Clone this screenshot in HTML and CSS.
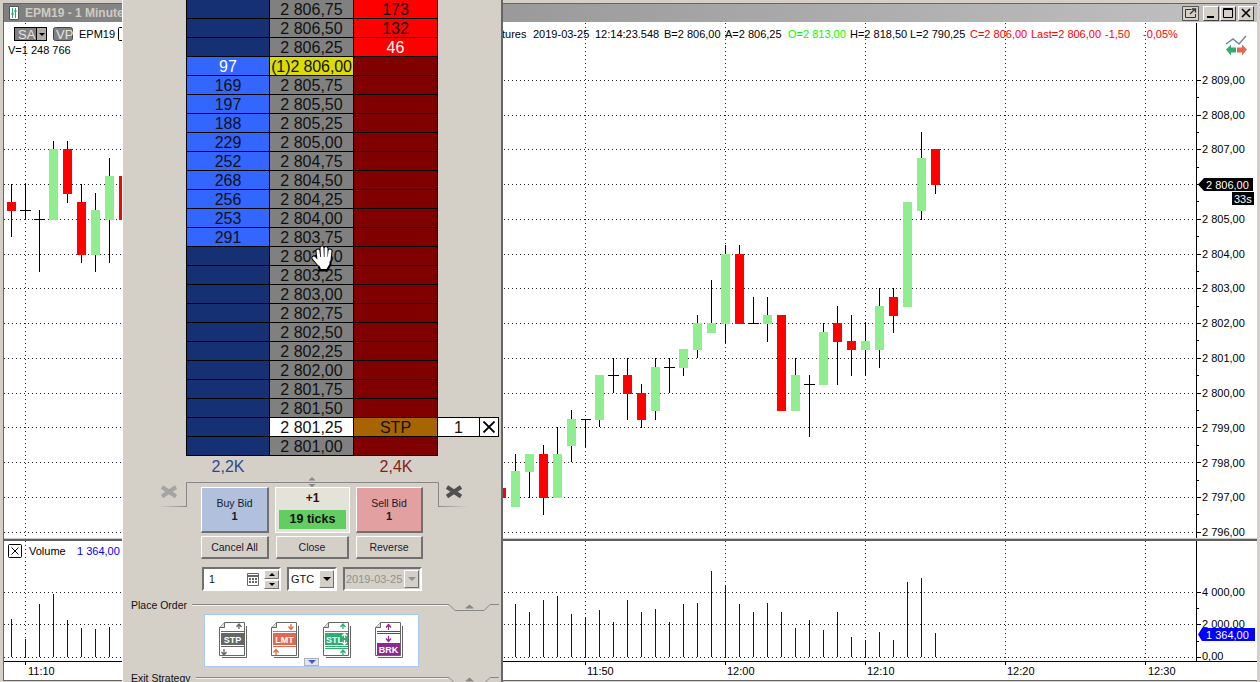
FILE: index.html
```html
<!DOCTYPE html>
<html lang="en">
<head>
<meta charset="utf-8">
<title>EPM19 - 1 Minute</title>
<link rel="stylesheet" href="styles.css">
</head>
<body>
<div class="desktop">
  <section class="window">
    <header class="titlebar">
      <svg class="doc-icon" width="10" height="14" viewBox="0 0 10 14"><path d="M.5.5h9v13h-9z" fill="#fff" stroke="#555"/><path d="M3.5 2v10M6.5 2v10M2 8h3M5 5h3" stroke="#1fa878" fill="none"/></svg>
      <span class="title">EPM19 - 1 Minute</span>
      <svg class="popout" width="17" height="15" viewBox="0 0 17 15"><path d="M.5.5h16v14H.5z" fill="#d4d0c8" stroke="#555"/><path d="M3.5 3.5h6M3.5 3.5v8h10V8" fill="none" stroke="#333"/><path d="M8 8l5-5M10 3h3.500v3.500" fill="none" stroke="#333" stroke-width="1.300"/></svg>
      <div class="winbtns">
        <button class="winbtn"><svg width="14" height="12" viewBox="0 0 14 12"><path d="M3 9h7v2H3z" fill="#000"/></svg></button>
        <button class="winbtn"><svg width="14" height="12" viewBox="0 0 14 12"><path d="M2.500 1.500h9v9h-9z M2.500 2.500h9" fill="none" stroke="#000"/></svg></button>
        <button class="winbtn winbtn-close"><svg width="14" height="12" viewBox="0 0 14 12"><path d="M3 2l8 8M11 2l-8 8" fill="none" stroke="#000" stroke-width="1.600"/></svg></button>
      </div>
    </header>
    <svg class="chart" viewBox="4 22 1253 658" width="1253" height="658">
      <path class="grid" d="M4 80.500H1196M4 115.500H1196M4 149.500H1196M4 184.500H1196M4 219.500H1196M4 254.500H1196M4 288.500H1196M4 323.500H1196M4 358.500H1196M4 393.500H1196M4 427.500H1196M4 462.500H1196M4 497.500H1196M4 532.500H1196M4 592.500H1196M4 624.500H1196M4 657.500H1196"/>
      <path class="grid" d="M25.500 23V538M585.500 23V538M725.500 23V538M865.500 23V538M1005.500 23V538M1145.500 23V538M25.500 541V661M585.500 541V661M725.500 541V661M865.500 541V661M1005.500 541V661M1145.500 541V661"/>

      <path class="wick" d="M11.500 184V237M25.500 184V219M20 210.500H31M39.500 210V272M34 219.500H45M53.500 141V149M67.500 141V203M81.500 184V263M95.500 193V272M109.500 158V263
        M501.500 480V510M515.500 454V471M529.500 472V498M543.500 445V515M557.500 427V454M571.500 410V462M585.500 419V447M581 419.500H591M599.500 420V427M613.500 358V393M608 375.500H619M627.500 358V420M641.500 384V428M655.500 358V420M669.500 358V393M664 367.500H675M683.500 368V376M697.500 315V358M711.500 280V323M725.500 245V343M739.500 245V254M753.500 297V323M748 323.500H759M767.500 297V342M795.500 358V375M809.500 375V437M804 384.500H815M823.500 323V332M837.500 306V385M851.500 315V376M865.500 322V376M879.500 288V368M893.500 288V333M921.500 132V220M935.500 185V194"/>
      <g class="up">
        <rect x="49" y="149" width="9" height="71"/><rect x="91" y="210" width="9" height="45"/><rect x="105" y="176" width="9" height="44"/>
        <rect x="511" y="471" width="9" height="36"/><rect x="525" y="454" width="9" height="18"/><rect x="553" y="454" width="9" height="44"/><rect x="567" y="419" width="9" height="27"/><rect x="595" y="375" width="9" height="45"/><rect x="651" y="367" width="9" height="44"/><rect x="679" y="349" width="9" height="19"/><rect x="693" y="323" width="9" height="27"/><rect x="707" y="323" width="9" height="10"/><rect x="721" y="254" width="9" height="70"/><rect x="763" y="315" width="9" height="9"/><rect x="791" y="375" width="9" height="36"/><rect x="819" y="332" width="9" height="53"/><rect x="861" y="341" width="9" height="9"/><rect x="875" y="306" width="9" height="44"/><rect x="903" y="202" width="9" height="105"/><rect x="917" y="158" width="9" height="53"/>
      </g>
      <g class="down">
        <rect x="7" y="202" width="9" height="9"/><rect x="63" y="149" width="9" height="45"/><rect x="77" y="202" width="9" height="53"/><rect x="119" y="176" width="9" height="44"/>
        <rect x="497" y="488" width="9" height="10"/><rect x="539" y="454" width="9" height="44"/><rect x="623" y="375" width="9" height="19"/><rect x="637" y="393" width="9" height="27"/><rect x="735" y="254" width="9" height="70"/><rect x="777" y="315" width="9" height="96"/><rect x="833" y="323" width="9" height="19"/><rect x="847" y="341" width="9" height="9"/><rect x="889" y="297" width="9" height="19"/><rect x="931" y="149" width="9" height="36"/>
      </g>

      <!-- toolbar -->
      <rect class="tb-btn" x="14.500" y="27.500" width="22" height="13"/>
      <rect class="tb-drop" x="36.500" y="27.500" width="10" height="13"/>
      <path d="M39 33h6l-3 3z" fill="#000"/>
      <rect class="tb-vp" x="53.500" y="27.500" width="19" height="13" rx="2"/>
      <text class="tb-label" x="18" y="39">SA</text>
      <text class="tb-label" x="56" y="39">VP</text>
      <text class="t" x="79" y="38">EPM19</text>
      <rect class="tb-box" x="118.500" y="27.500" width="12" height="13" rx="1"/>
      <text class="t" x="8" y="54">V=1 248 766</text>

      <!-- quote line -->
      <text class="t" x="502" y="38">tures</text>
      <text class="t" x="533" y="38">2019-03-25</text>
      <text class="t" x="595" y="38">12:14:23.548</text>
      <text class="t" x="664" y="38">B=2 806,00</text>
      <text class="t" x="725" y="38">A=2 806,25</text>
      <text class="t t-green" x="788" y="38">O=2 813,00</text>
      <text class="t" x="850" y="38">H=2 818,50</text>
      <text class="t" x="910" y="38">L=2 790,25</text>
      <text class="t t-red" x="970" y="38">C=2 806,00</text>
      <text class="t t-red" x="1031" y="38">Last=2 806,00</text>
      <text class="t t-red" x="1105" y="38">-1,50</text>
      <text class="t t-red" x="1143" y="38">-0,05%</text>

      <!-- strategy icon -->
      <path d="M1226 44l7-5 6 5 7-8" fill="none" stroke="#7088a8" stroke-width="1.500"/>
      <path d="M1226 49.500l5-5v3h5v5h-5v3z" fill="#2fae6e"/>
      <path d="M1247 49.500l-5-5v3h-5v5h5v3z" fill="#e2694f"/>

      <!-- price axis -->
      <path class="axis" d="M1196.500 23V538M1196.500 541V661"/>
      <path class="axis" d="M1197 80.500h4M1197 115.500h4M1197 149.500h4M1197 184.500h4M1197 219.500h4M1197 254.500h4M1197 288.500h4M1197 323.500h4M1197 358.500h4M1197 393.500h4M1197 427.500h4M1197 462.500h4M1197 497.500h4M1197 532.500h4M1197 97.500h2M1197 132.500h2M1197 167.500h2M1197 201.500h2M1197 236.500h2M1197 271.500h2M1197 306.500h2M1197 340.500h2M1197 375.500h2M1197 410.500h2M1197 445.500h2M1197 480.500h2M1197 514.500h2M1197 592.500h4M1197 624.500h4M1197 657.500h4M1197 608.500h2M1197 641.500h2"/>
      <text class="t" x="1202" y="84">2 809,00</text>
      <text class="t" x="1202" y="119">2 808,00</text>
      <text class="t" x="1202" y="153">2 807,00</text>
      <text class="t" x="1202" y="223">2 805,00</text>
      <text class="t" x="1202" y="258">2 804,00</text>
      <text class="t" x="1202" y="292">2 803,00</text>
      <text class="t" x="1202" y="327">2 802,00</text>
      <text class="t" x="1202" y="362">2 801,00</text>
      <text class="t" x="1202" y="397">2 800,00</text>
      <text class="t" x="1202" y="432">2 799,00</text>
      <text class="t" x="1202" y="467">2 798,00</text>
      <text class="t" x="1202" y="501">2 797,00</text>
      <text class="t" x="1202" y="536">2 796,00</text>
      <path d="M1198 184.500l6-6.500h49v13h-49z" fill="#000"/>
      <text class="t t-white" x="1206" y="189">2 806,00</text>
      <rect x="1232" y="192" width="22" height="13" fill="#000"/>
      <text class="t t-white" x="1234" y="203">33s</text>

      <!-- volume pane -->
      <rect x="4" y="538" width="1253" height="1" fill="#c8c8c8"/>
      <rect x="4" y="539" width="1253" height="2" fill="#606060"/>
      <rect class="vol-x" x="8.500" y="544.500" width="13" height="13" rx="1"/>
      <path d="M11.500 547.500l7 7M18.500 547.500l-7 7" stroke="#000" fill="none"/>
      <text class="t" x="29" y="555">Volume</text>
      <text class="t t-blue" x="77" y="555">1 364,00</text>
      <path class="vol" d="M11.500 619V657M25.500 639V657M39.500 604V657M53.500 594V657M67.500 620V657M81.500 628V657M95.500 629V657M109.500 627V657M515.500 604V657M529.500 612V657M543.500 600V657M557.500 596V657M571.500 614V657M585.500 618V657M599.500 610V657M613.500 622V657M627.500 600V657M641.500 612V657M655.500 609V657M669.500 622V657M683.500 604V657M697.500 603V657M711.500 571V657M725.500 586V657M739.500 604V657M753.500 612V657M767.500 603V657M781.500 612V657M795.500 628V657M809.500 620V657M823.500 630V657M837.500 612V657M851.500 637V657M865.500 640V657M879.500 632V657M893.500 640V657M907.500 582V657M921.500 578V657M935.500 633V657"/>
      <text class="t" x="1202" y="596">4 000,00</text>
      <text class="t" x="1202" y="628">2 000,00</text>
      <text class="t" x="1202" y="660">0,00</text>
      <path d="M1198 634.500l4-6.500h53v13h-53z" fill="#0000ff"/>
      <text class="t t-white" x="1206" y="639">1 364,00</text>
      <path class="axis" d="M4 661.500H1257M25.500 662v3M585.500 662v3M725.500 662v3M865.500 662v3M1005.500 662v3M1145.500 662v3"/>
      <text class="t" x="28" y="675">11:10</text>
      <text class="t" x="587" y="675">11:50</text>
      <text class="t" x="727" y="675">12:00</text>
      <text class="t" x="867" y="675">12:10</text>
      <text class="t" x="1007" y="675">12:20</text>
      <text class="t" x="1148" y="675">12:30</text>
    </svg>
  </section>

  <aside class="dock">
    <div class="ladder">
      <div class="row"><div class="cell bid"></div><div class="cell price">2 806,75</div><div class="cell ask">173</div></div>
      <div class="row"><div class="cell bid"></div><div class="cell price">2 806,50</div><div class="cell ask">132</div></div>
      <div class="row"><div class="cell bid"></div><div class="cell price">2 806,25</div><div class="cell ask ask-last">46</div></div>
      <div class="row"><div class="cell bid-on bid-first">97</div><div class="cell price price-last">(1)2 806,00</div><div class="cell ask-off"></div></div>
      <div class="row"><div class="cell bid-on">169</div><div class="cell price">2 805,75</div><div class="cell ask-off"></div></div>
      <div class="row"><div class="cell bid-on">197</div><div class="cell price">2 805,50</div><div class="cell ask-off"></div></div>
      <div class="row"><div class="cell bid-on">188</div><div class="cell price">2 805,25</div><div class="cell ask-off"></div></div>
      <div class="row"><div class="cell bid-on">229</div><div class="cell price">2 805,00</div><div class="cell ask-off"></div></div>
      <div class="row"><div class="cell bid-on">252</div><div class="cell price">2 804,75</div><div class="cell ask-off"></div></div>
      <div class="row"><div class="cell bid-on">268</div><div class="cell price">2 804,50</div><div class="cell ask-off"></div></div>
      <div class="row"><div class="cell bid-on">256</div><div class="cell price">2 804,25</div><div class="cell ask-off"></div></div>
      <div class="row"><div class="cell bid-on">253</div><div class="cell price">2 804,00</div><div class="cell ask-off"></div></div>
      <div class="row"><div class="cell bid-on">291</div><div class="cell price">2 803,75</div><div class="cell ask-off"></div></div>
      <div class="row"><div class="cell bid"></div><div class="cell price">2 803,50</div><div class="cell ask-off"></div></div>
      <div class="row"><div class="cell bid"></div><div class="cell price">2 803,25</div><div class="cell ask-off"></div></div>
      <div class="row"><div class="cell bid"></div><div class="cell price">2 803,00</div><div class="cell ask-off"></div></div>
      <div class="row"><div class="cell bid"></div><div class="cell price">2 802,75</div><div class="cell ask-off"></div></div>
      <div class="row"><div class="cell bid"></div><div class="cell price">2 802,50</div><div class="cell ask-off"></div></div>
      <div class="row"><div class="cell bid"></div><div class="cell price">2 802,25</div><div class="cell ask-off"></div></div>
      <div class="row"><div class="cell bid"></div><div class="cell price">2 802,00</div><div class="cell ask-off"></div></div>
      <div class="row"><div class="cell bid"></div><div class="cell price">2 801,75</div><div class="cell ask-off"></div></div>
      <div class="row"><div class="cell bid"></div><div class="cell price">2 801,50</div><div class="cell ask-off"></div></div>
      <div class="row"><div class="cell bid"></div><div class="cell price-order">2 801,25</div><div class="cell ask-stop">STP</div><div class="qty">1</div><div class="qty-x"><svg width="14" height="12" viewBox="0 0 14 12"><path d="M1.500 .5l11 11M12.500 .5l-11 11" fill="none" stroke="#000" stroke-width="1.800"/></svg></div></div>
      <div class="row"><div class="cell bid"></div><div class="cell price">2 801,00</div><div class="cell ask-off"></div></div>
    </div>
    <div class="totals"><span class="total total-bid">2,2K</span><span class="total total-gap"></span><span class="total total-ask">2,4K</span></div>

    <div class="trade">
      <svg class="frame" width="340" height="32" viewBox="0 0 340 32">
        <defs>
          <linearGradient id="fadeL"><stop offset="0" stop-color="#888" stop-opacity="0"/><stop offset="1" stop-color="#888"/></linearGradient>
          <linearGradient id="fadeR"><stop offset="0" stop-color="#888"/><stop offset="1" stop-color="#888" stop-opacity="0"/></linearGradient>
        </defs>
        <path d="M28.500 30V6.500H280.500V30" fill="none" stroke="#888"/>
        <rect x="0" y="30" width="29" height="1" fill="url(#fadeL)"/>
        <rect x="280" y="30" width="30" height="1" fill="url(#fadeR)"/>
        <path d="M154 1l-3.500 3.500h7zM154 11.500l-3.500-3.500h7z" fill="#888"/>
        <path d="M4 11l14 9.500M18 11L4 20.500" stroke="#a4a4a0" stroke-width="4" fill="none"/>
        <path d="M289 11l14 9.500M303 11l-14 9.500" stroke="#505050" stroke-width="4" fill="none"/>
      </svg>
      <div class="btn-row btn-row-main">
        <button class="btn btn-big btn-buy"><span>Buy Bid</span><b>1</b></button>
        <div class="position"><b class="pos-qty">+1</b><b class="ticks">19 ticks</b></div>
        <button class="btn btn-big btn-sell"><span>Sell Bid</span><b>1</b></button>
      </div>
      <div class="btn-row btn-row-small">
        <button class="btn btn-cancel">Cancel All</button>
        <button class="btn btn-close">Close</button>
        <button class="btn btn-reverse">Reverse</button>
      </div>
      <div class="inputs">
        <div class="field field-qty">
          <span class="field-val">1</span>
          <svg class="calendar" width="12" height="13" viewBox="0 0 12 13"><path d="M.5.5h11v12H.5z" fill="#fff" stroke="#666"/><path d="M0 3h12" stroke="#666" stroke-width="2"/><path d="M2 5h2v2H2zM5 5h2v2H5zM8 5h2v2H8zM2 8h2v2H2zM5 8h2v2H5zM8 8h2v2H8z" fill="#666"/></svg>
          <div class="spin"><span class="spin-btn"><i class="tri tri-up"></i></span><span class="spin-btn"><i class="tri"></i></span></div>
        </div>
        <div class="field field-tif"><span class="field-val field-val-tif">GTC</span><span class="drop"><i class="tri"></i></span></div>
        <div class="field field-date"><span class="field-val field-val-date">2019-03-25</span><span class="drop drop-off"><i class="tri tri-off"></i></span></div>
      </div>
    </div>

    <div class="group-head">
      <span class="group-label">Place Order</span><span class="group-line"></span>
      <svg width="51" height="10" viewBox="0 0 51 10"><path d="M0 1.500h1l6 6h29l6-6h9" fill="none" stroke="#888"/><path d="M19 3.500l3.500-3 3.500 3 .5 1h-8z" fill="#888" transform="translate(-1 1)"/></svg>
    </div>
    <div class="orders">
      <svg class="order-icon" width="29" height="37" viewBox="0 0 29 37"><path d="M3 35.500h24.500V4" fill="none" stroke="#666"/><path class="doc" d="M.5 5.500l5-5h20v33H.500z" stroke="#666"/><path d="M.5 5.500h5v-5" fill="#ddd" stroke="#666"/><path d="M20 7V2.500M17.500 5l2.500-3 2.500 3" fill="none" stroke="#666" stroke-width="1.300"/><path d="M2 9.500h23M2 24.500h23" stroke="#666"/><rect x="2" y="11" width="23" height="12" fill="#666"/><text class="icon-t" x="13.500" y="21">STP</text><path d="M5 27v5M2.500 30l2.500 3 2.500-3" fill="none" stroke="#666" stroke-width="1.300"/></svg>
      <svg class="order-icon" width="29" height="37" viewBox="0 0 29 37"><path d="M3 35.500h24.500V4" fill="none" stroke="#666"/><path class="doc" d="M.5 5.500l5-5h20v33H.500z" stroke="#666"/><path d="M.5 5.500h5v-5" fill="#ddd" stroke="#666"/><path d="M20 2v5M17.500 4.500l2.500 3 2.500-3" fill="none" stroke="#e2694f" stroke-width="1.300"/><path d="M2 9.500h23M2 24.500h23" stroke="#e2694f"/><rect x="2" y="11" width="23" height="12" fill="#e2694f"/><text class="icon-t" x="13.500" y="21">LMT</text><path d="M5 33v-5M2.500 30.500l2.500-3 2.500 3" fill="none" stroke="#e2694f" stroke-width="1.300"/></svg>
      <svg class="order-icon" width="29" height="37" viewBox="0 0 29 37"><path d="M3 35.500h24.500V4" fill="none" stroke="#666"/><path class="doc" d="M.5 5.500l5-5h20v33H.500z" stroke="#666"/><path d="M.5 5.500h5v-5" fill="#ddd" stroke="#666"/><path d="M20 7V2.500M17.500 5l2.500-3 2.500 3" fill="none" stroke="#2fae6e" stroke-width="1.300"/><path d="M2 9.500h23M2 24.500h23M2 26.500h23" stroke="#2fae6e"/><rect x="2" y="11" width="23" height="12" fill="#2fae6e"/><text class="icon-t icon-t-left" x="3" y="21">STL</text><path d="M21.500 16v-4M19 14l2.500-2.500L24 14M21.500 18v4M19 20l2.500 2.500L24 20" fill="none" stroke="#fff" stroke-width="1.200"/><path d="M20 33.500v-5M17.500 31l2.500-3 2.500 3" fill="none" stroke="#2fae6e" stroke-width="1.300"/></svg>
      <svg class="order-icon" width="29" height="37" viewBox="0 0 29 37"><path d="M3 35.500h24.500V4" fill="none" stroke="#666"/><path class="doc" d="M.5 5.500l5-5h20v33H.500z" stroke="#666"/><path d="M.5 5.500h5v-5" fill="#ddd" stroke="#666"/><path d="M13.500 8V3M11 5.500l2.500-3 2.500 3" fill="none" stroke="#8b2a8b" stroke-width="1.300"/><path d="M2 9.500h23M2 11.500h23" stroke="#8b2a8b"/><path d="M13.500 14v5M11 16.500l2.500 3 2.500-3" fill="none" stroke="#8b2a8b" stroke-width="1.300"/><rect x="2" y="21" width="23" height="12" fill="#8b2a8b"/><text class="icon-t" x="13.500" y="31">BRK</text></svg>
      <span class="more"><i class="tri tri-blue"></i></span>
    </div>
    <div class="group-head group-head-exit">
      <span class="group-label">Exit Strategy</span><span class="group-line"></span>
      <svg width="51" height="10" viewBox="0 0 51 10"><path d="M0 1.500h1l6 6h29l6-6h9" fill="none" stroke="#888"/><path d="M19 3.500l3.500-3 3.500 3 .5 1h-8z" fill="#888" transform="translate(-1 1)"/></svg>
    </div>
  </aside>

  <svg class="hand" width="24" height="28" viewBox="0 0 24 28">
    <g fill="none" stroke="#000" stroke-linecap="round">
      <path stroke-width="5" d="M7 7l1 9M11 4l.5 11M15 4.500L15 15M19 7l-1 9M3 14l5 6M8 14h10v6l-3 5H10z"/>
    </g>
    <g fill="none" stroke="#fff" stroke-linecap="round">
      <path stroke-width="3" d="M7 7l1 9M11 4l.5 11M15 4.500L15 15M19 7l-1 9M3 14l5 6"/>
    </g>
    <path d="M7 13h11.500v7l-3 5H10l-3-6z" fill="#fff"/>
  </svg>
</div>
</body>
</html>
```

FILE: styles.css
```css
* { box-sizing: border-box; }
html, body { margin: 0; padding: 0; }
body { font-family: "Liberation Sans", Arial, sans-serif; background: #d4d0c8; }

.desktop { position: relative; width: 1260px; height: 682px; overflow: hidden; background: #d4d0c8; }

/* chart window */
.window {
  display: flex; flex-direction: column; width: 1254px; height: 678px; margin: 0 3px;
  position: relative; top: 3px;
  border-top: 1px solid #666; border-left: 1px solid #666; border-bottom: 1px solid #666;
}
.titlebar {
  display: flex; align-items: center; height: 18px; flex: none;
  background: linear-gradient(90deg, #7f7f7f, #c2c2c2);
  padding: 0 3px 0 5px;
}
.doc-icon { flex: none; }
.title { margin-left: 6px; font-size: 12px; font-weight: bold; color: #cfcbc3; flex: 1; white-space: nowrap; }
.popout { flex: none; margin-right: 4px; }
.winbtns { display: flex; gap: 1px; }
.winbtn {
  display: flex; align-items: center; justify-content: center; padding: 0;
  width: 16px; height: 15px; background: #d4d0c8;
  border: 1px solid; border-color: #fff #404040 #404040 #fff;
}
.winbtn-close { margin-left: 1px; }
.chart { display: block; flex: none; background: #fff; }
.grid { fill: none; stroke: #222; stroke-dasharray: 1 3; shape-rendering: crispEdges; }
.wick, .axis { fill: none; stroke: #000; shape-rendering: crispEdges; }
.vol { fill: none; stroke: #0000d8; shape-rendering: crispEdges; }
.up { fill: #90ee90; }
.down { fill: #f00; }
.t { font-family: "Liberation Sans", Arial, sans-serif; font-size: 11px; fill: #000; }
.t-green { fill: #0f0; }
.t-red { fill: #f00; }
.t-white { fill: #fff; }
.t-blue { fill: #00f; }
.tb-btn, .tb-drop { fill: #808080; stroke: #000; }
.tb-drop { fill: #b0aea8; }
.tb-vp { fill: #808080; stroke: #444; }
.tb-box { fill: #fff; stroke: #000; }
.tb-label { font-family: "Liberation Sans", Arial, sans-serif; font-size: 13px; fill: #e4e4e4; }
.vol-x { fill: #fff; stroke: #000; }

/* dock panel */
.dock {
  position: absolute; left: 122px; top: 0; width: 381px; height: 682px; overflow: hidden;
  background: #d4d0c8; border-left: 1px solid #fff; border-right: 2px solid #666;
}
.ladder { margin: 0 0 0 63px; border-left: 1px solid #000; width: 252px; }
.row { display: flex; height: 19px; }
.cell {
  height: 19px; line-height: 19px; font-size: 16px; text-align: center; color: #111;
  border-right: 1px solid #000; border-bottom: 1px solid #000; flex: none; width: 84px; white-space: nowrap;
}
.cell:first-child { width: 83px; }
.bid { background: #163173; }
.bid-on { background: #36f; }
.bid-first { color: #fff; }
.price { background: #808080; }
.price-last { background: #dcdc00; font-size: 16px; letter-spacing: -.1px; }
.price-order { background: #fff; }
.ask { background: #f00; }
.ask-last { color: #fff; }
.ask-off { background: #800000; }
.ask-stop { background: #a86400; }
.qty {
  flex: none; width: 41px; height: 20px; margin-top: -1px; line-height: 20px;
  font-size: 16px; text-align: center; background: #fff; border-top: 1px solid #000; border-bottom: 1px solid #000; color: #111;
}
.qty-x {
  flex: none; width: 20px; height: 20px; margin-top: -1px; background: #fff;
  border: 1px solid #000; display: flex; align-items: center; justify-content: center;
}
.totals { display: flex; margin-left: 63px; height: 20px; line-height: 21px; font-size: 16px; text-align: center; }
.total { width: 84px; }
.total-bid { color: #2b4a90; }
.total-ask { color: #8a1c1c; }

/* trade controls */
.trade { position: relative; padding: 11px 0 0 78px; height: 122px; }
.frame { position: absolute; left: 35px; top: 0; }
.btn-row { position: relative; display: flex; }
.btn-row-main { gap: 6px; height: 46px; }
.btn-row-small { height: 23px; margin-top: 3px; }
.btn {
  display: block; padding: 0; background: #d4d0c8; font: 10.5px "Liberation Sans", Arial, sans-serif; color: #1a1a30; text-align: center;
  border: 1px solid; border-color: #fff #707070 #707070 #fff; border-width: 1px 2px 2px 1px;
}
.btn-big { display: flex; flex-direction: column; align-items: center; justify-content: center; line-height: 13px; }
.btn-big b { font-size: 11px; }
.btn-buy { width: 68px; background: #b0c0dd; }
.btn-sell { width: 67px; background: #e3a0a0; }
.position {
  width: 75px; background: #e4e3da; border: 1px solid #fff; padding: 3px 3px 3px;
  display: flex; flex-direction: column; align-items: center;
}
.pos-qty { font-size: 12px; line-height: 15px; height: 19px; color: #3a0a0a; }
.ticks { width: 67px; height: 19px; line-height: 19px; background: #63cc63; color: #111; font-size: 12.500px; text-align: center; }
.btn-cancel { width: 68px; }
.btn-close { width: 73px; margin-left: 7px; }
.btn-reverse { width: 67px; margin-left: 7px; }
.inputs { display: flex; gap: 6px; margin: 8px 0 0 1px; height: 24px; }
.field {
  display: flex; align-items: center; height: 24px; background: #fff; position: relative;
  border: 2px solid; border-color: #707070 #fff #fff #707070; outline: 0;
}
.field-qty { width: 79px; }
.field-tif { width: 50px; }
.field-date { width: 79px; background: #d4d0c8; }
.field-val { font-size: 10.5px; color: #111; flex: 1; padding-left: 5px; }
.field-val-tif { padding-left: 2px; font-size: 11px; }
.field-val-date { padding-left: 1px; color: #909090; font-size: 11px; }
.calendar { flex: none; margin-right: 5px; }
.spin { flex: none; display: flex; flex-direction: column; gap: 1px; width: 15px; margin-right: 0; }
.spin-btn {
  height: 9px; background: #d4d0c8; display: flex; align-items: center; justify-content: center;
  border: 1px solid; border-color: #fff #707070 #707070 #fff;
}
.drop {
  flex: none; width: 15px; height: 18px; background: #d4d0c8; margin-right: 1px; display: flex; align-items: center; justify-content: center;
  border: 1px solid; border-color: #fff #707070 #707070 #fff;
}
.tri { display: block; width: 0; height: 0; border: 4px solid transparent; border-top-color: #000; border-bottom-width: 0; }
.spin .tri { border-width: 3px 3px 0; }
.spin .tri-up { border-width: 0 3px 3px; border-bottom-color: #000; border-top-color: transparent; }
.tri-off { border-top-color: #909090; }
.tri-blue { border-width: 4px 4px 0; border-top-color: #4060c0; }

/* groups */
.group-head { display: flex; align-items: center; height: 14px; margin: 0 2px 0 8px; }
.group-label { font-size: 10.5px; color: #111; margin-right: 5px; white-space: nowrap; }
.group-line { flex: 1; height: 2px; border-top: 1px solid #888; border-bottom: 1px solid #f4f2ec; }
.group-head svg { flex: none; margin-top: 6px; }
.orders {
  position: relative; display: flex; gap: 23px; width: 215px; height: 53px; margin: 2px 0 0 81px; padding: 7px 0 0 14px;
  background: #fff; border: 1px solid #a8c8f0;
}
.order-icon { flex: none; }
.doc { fill: #fff; }
.icon-t { font: bold 9px "Liberation Sans", Arial, sans-serif; fill: #fff; text-anchor: middle; }
.icon-t-left { text-anchor: start; }
.more {
  position: absolute; left: 99px; bottom: 0; width: 15px; height: 8px; background: #e4e4ea; border: 1px solid #b0b0c0;
  display: flex; align-items: center; justify-content: center;
}
.group-head-exit { margin-top: 4px; }

.hand { position: absolute; left: 311px; top: 244px; }
```
